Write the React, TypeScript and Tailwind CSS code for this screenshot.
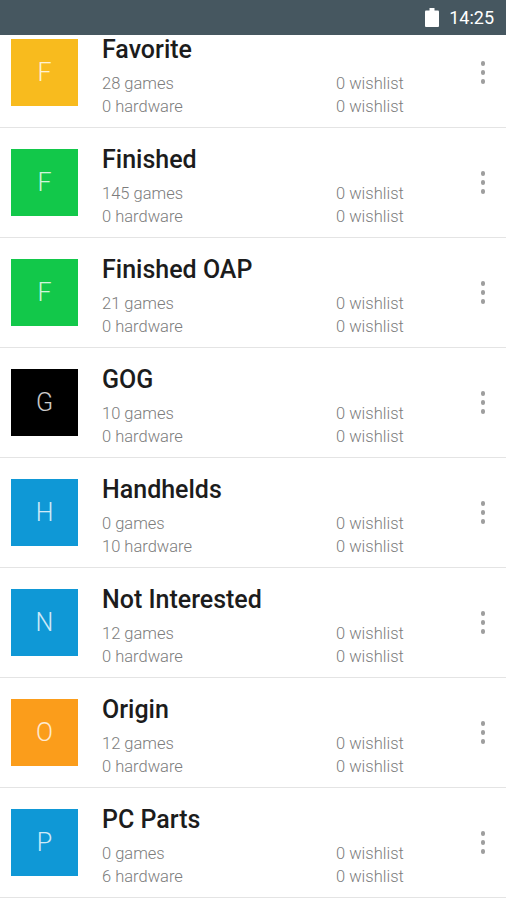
import { Fragment } from "react";

type Collection = {
  name: string;
  color: string;
  games: number;
  hardware: number;
};

const collections: Collection[] = [
  { name: "Favorite", color: "bg-[#f8bb1e]", games: 28, hardware: 0 },
  { name: "Finished", color: "bg-[#12c84a]", games: 145, hardware: 0 },
  { name: "Finished OAP", color: "bg-[#12c84a]", games: 21, hardware: 0 },
  { name: "GOG", color: "bg-[#000000]", games: 10, hardware: 0 },
  { name: "Handhelds", color: "bg-[#0f98d6]", games: 0, hardware: 10 },
  { name: "Not Interested", color: "bg-[#0f98d6]", games: 12, hardware: 0 },
  { name: "Origin", color: "bg-[#fb9d1b]", games: 12, hardware: 0 },
  { name: "PC Parts", color: "bg-[#0f98d6]", games: 0, hardware: 6 },
];

function StatusBar() {
  return (
    <div className="relative z-10 flex h-[35px] items-center justify-end bg-[#465760] pr-[12px]">
      <svg width="14" height="19" viewBox="0 0 14 19" className="mr-[10px]">
        <rect x="4.5" y="0" width="5" height="3" fill="#ffffff" />
        <rect x="0" y="2.5" width="14" height="16.5" rx="1" fill="#ffffff" />
      </svg>
      <span className="text-[18px] leading-none text-white">14:25</span>
    </div>
  );
}

function Dots() {
  return (
    <div className="flex flex-col items-center gap-[4.5px]">
      <span className="h-[4.5px] w-[4.5px] rounded-full bg-[#9e9e9e]" />
      <span className="h-[4.5px] w-[4.5px] rounded-full bg-[#9e9e9e]" />
      <span className="h-[4.5px] w-[4.5px] rounded-full bg-[#9e9e9e]" />
    </div>
  );
}

function Row({ item }: { item: Collection }) {
  return (
    <div className="flex h-[110px] items-start border-b border-[#e4e4e4]">
      <div
        className={`${item.color} ml-[11px] mt-[21px] flex h-[67px] w-[67px] shrink-0 items-center justify-center text-[25px] font-light text-white/80`}
      >
        {item.name[0]}
      </div>
      <div className="ml-[24px] flex-1 pt-[18px]">
        <div className="text-[25px] font-medium leading-[28px] text-[#1c1c1c]">{item.name}</div>
        <div className="mt-[8px] grid grid-cols-[234px_1fr] text-[16.5px] font-light leading-[23px] text-[#7c7c7c]">
          <span>{item.games} games</span>
          <span>0 wishlist</span>
          <span>{item.hardware} hardware</span>
          <span>0 wishlist</span>
        </div>
      </div>
      <div className="mr-[21px] self-center">
        <Dots />
      </div>
    </div>
  );
}

export default function App() {
  return (
    <div className="h-[900px] w-[506px] overflow-hidden bg-white font-['Roboto',sans-serif]">
      <StatusBar />
      <div className="-mt-[17px]">
        {collections.map((c) => (
          <Fragment key={c.name}>
            <Row item={c} />
          </Fragment>
        ))}
      </div>
    </div>
  );
}
